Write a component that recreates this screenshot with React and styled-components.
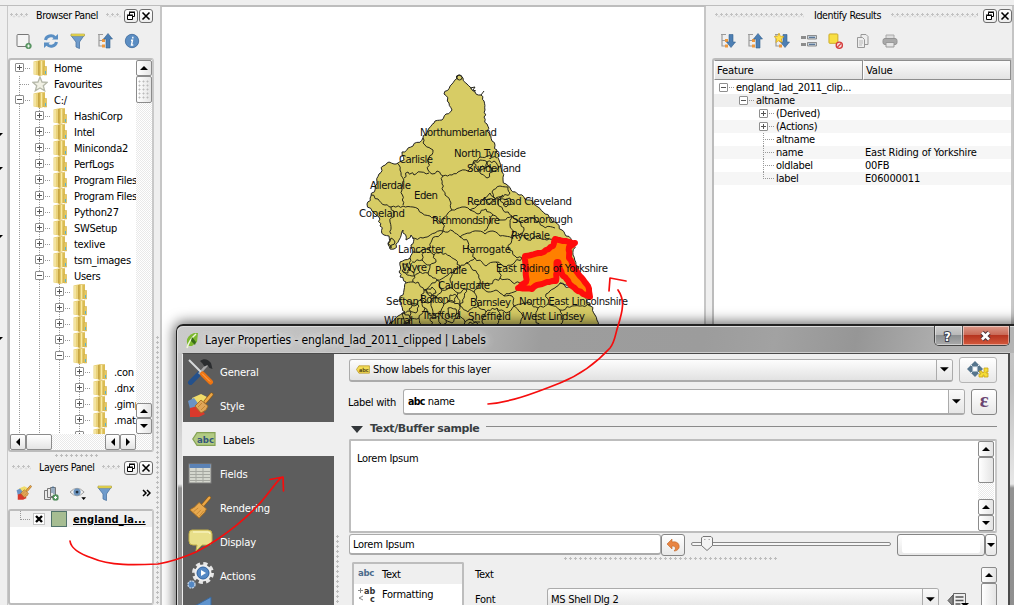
import React from "react";
import styled, { createGlobalStyle } from "styled-components";

const Global = createGlobalStyle`
  * { box-sizing: border-box; }
  body {
    margin: 0; overflow: hidden; background: #efefef; color: #000;
    font: 11px/13px "DejaVu Sans Condensed", "DejaVu Sans", "Noto Sans", sans-serif;
    font-stretch: condensed; letter-spacing: -0.28px;
  }
`;

/* ---------- window frame ---------- */
const Screen = styled.div`
  position: relative; width: 1014px; height: 605px; overflow: hidden;
  background: #efefef; display: flex; flex-direction: column;
`;
const TopEdge = styled.div`
  height: 6px; flex: none; border-bottom: 1px solid #bdbdbd; background: #efefef;
`;
const Workspace = styled.div`
  flex: 1; min-height: 0; display: flex;
  border-right: 2px solid #c4c4c4;
`;
const ToolStrip = styled.div`
  width: 8px; flex: none; border-right: 1px solid #c8c8c8; overflow: hidden;
`;
const LeftDock = styled.div`
  width: 146px; flex: none; display: flex; flex-direction: column;
`;
const dots = `radial-gradient(circle at 1.5px 1.5px, #bdbdbd 1px, transparent 1.3px)`;
const Splitter = styled.div`
  width: ${p => p.$w || 6}px; flex: none; display: flex; justify-content: center; align-items: flex-start;
  padding-top: ${p => p.$top || 0}px;
`;
const VGrip = styled.div`
  width: 3px; height: ${p => p.$h}px; background: ${dots}; background-size: 3px 5px;
`;
const HGrip = styled.div`
  height: 3px; width: ${p => p.$w}px; background: ${dots}; background-size: 5px 3px; margin: ${p => p.$m || "0"};
`;
const MapFrame = styled.div`
  width: 546px; flex: none; background: #fff; border: 1px solid #bdbdbd; border-width: 1px 2px 0 2px;
  border-color: #bdbdbd #c6c6c6; overflow: hidden;
`;
const RightDock = styled.div`
  width: 302px; flex: none; display: flex; flex-direction: column;
`;

/* ---------- dock widgets ---------- */
const DockTitle = styled.div`
  height: 19px; flex: none; display: flex; align-items: center; padding: ${p => p.$pad || "0 2px 0 0"};
  font-size: 10.6px; gap: ${p => p.$gap || 8}px; letter-spacing: -.4px; white-space: nowrap;
`;
const Texture = styled.div`
  flex: ${p => p.$w ? "none" : 1}; width: ${p => p.$w || 0}px; height: 5px;
  background: radial-gradient(circle at 1.5px 1.5px, #c2c2c2 1px, transparent 1.3px) 0 0/5px 5px,
              radial-gradient(circle at 1.5px 1.5px, #d4d4d4 .8px, transparent 1.2px) 2.5px 2px/5px 5px;
`;
const TitleButtons = styled.div`display: flex; gap: 1px; flex: none; margin-left: ${p => p.$l || 0}px;`;
const TitleBtn = styled.div`
  width: 14px; height: 14px; border: 1px solid #6d6d6d; border-radius: 3px;
  background: linear-gradient(#fff, #ececec); display: flex; align-items: center; justify-content: center;
`;
const Toolbar = styled.div`
  height: 32px; flex: none; display: flex; align-items: center; gap: 11px; padding-left: 8px;
`;
const MoreMark = styled.svg`margin-left: 18px;`;
const Box = styled.div`
  border: 2px solid #bcbcbc; border-right-color: #c9c9c9; border-radius: 3px; background: #fff; overflow: hidden;
  height: ${p => p.$h ? p.$h + "px" : "auto"}; flex: ${p => p.$h ? "none" : "1"};
  margin: ${p => p.$m || "0"}; min-height: 0; display: flex; flex-direction: column;
`;
const TreeArea = styled.div`display: flex; flex: 1; min-height: 0;`;
const TreeRows = styled.div`flex: 1; overflow: hidden; min-width: 0;`;
const TreeRow = styled.div`
  height: 16px; display: flex; align-items: center; white-space: nowrap; margin-left: -1px;
`;
const Cell = styled.div`
  width: 20px; height: 16px; flex: none; display: flex; align-items: center; justify-content: center;
  background: ${p => p.$line ? "repeating-linear-gradient(#999 0 1px, transparent 1px 2px) 10px 0/1px 100% no-repeat" : "none"};
`;
const Expander = styled.div`
  width: 9px; height: 9px; border: 1px solid #8f8f8f; border-radius: 1px; flex: none; margin-top: -1px;
  background:
    linear-gradient(#555, #555) center/5px 1px no-repeat,
    ${p => p.$open ? "" : "linear-gradient(#555, #555) center/1px 5px no-repeat,"} #fff;
`;
const Stub = styled.div`
  width: ${p => p.$w || 5}px; height: 1px; flex: none; margin: ${p => p.$m || "0"};
  background: repeating-linear-gradient(90deg, #999 0 1px, transparent 1px 2px);
`;
const IconCell = styled.div`
  width: 16px; height: 16px; flex: none; display: flex; justify-content: center; margin: 0 6px 0 ${p => p.$l}px;
`;
const SBar = styled.div`
  flex: none; display: flex; flex-direction: ${p => p.$row ? "row" : "column"};
  ${p => p.$row ? "height: 16px;" : "width: 16px;"}
  background: repeating-conic-gradient(#fff 0 25%, #e9e9e9 0 50%) 0 0/2px 2px;
`;
const SBtn = styled.div`
  width: ${p => p.$w || 16}px; height: ${p => p.$h || 16}px; flex: none; border: 1px solid #8b8b8b; border-radius: 2px;
  background: linear-gradient(${p => p.$row ? "180deg" : "90deg"}, #fff, #e4e4e4);
  display: flex; align-items: center; justify-content: center;
`;
const Gap = styled.div`flex: ${p => p.$n ? "none" : 1}; width: ${p => p.$n || 0}px; height: ${p => p.$n || 0}px;`;
const BarLead = styled.div`height: 6px; background: #efefef;`;
const Knurl = styled.div`
  width: 12px; height: 20px; background: radial-gradient(circle at 1.5px 1.5px, #bbb .8px, transparent 1.2px) 0 0/4px 4px;
`;
const LayerRow = styled.div`
  height: 16px; background: #f0f0f0; display: flex; align-items: center; padding-left: 10px;
`;
const LayerElbow = styled.div`
  width: 10px; height: 9px; align-self: flex-start; border: 1px dotted #999; border-width: 0 0 1px 1px;
`;
const CheckBox = styled.div`
  width: 12px; height: 12px; margin-left: 3px; border: 1px solid #c4c4c4; background: #fff; display: flex; align-items: center; justify-content: center;
`;
const Swatch = styled.div`width: 16px; height: 16px; margin: 0 6px; background: #a6bd92; border: 1px solid #51736b;`;
const LayerName = styled.span`font-weight: bold; text-decoration: underline; font-size: 11px; letter-spacing: .1px;`;

/* ---------- identify results ---------- */
const TableHead = styled.div`
  height: 21px; display: flex; flex: none; line-height: 20px; font-size: 11.2px;
`;
const HeadCell = styled.div`
  width: ${p => p.$w}px; padding-left: 2px; border: 1px solid #8d8d8d; border-left-color: #fff; height: 20px;
  background: linear-gradient(#fbfbfb, #e3e3e3); letter-spacing: -.2px;
`;
const ResultRow = styled.div`
  height: 13px; flex: none; display: flex; background: ${p => p.$bg};
`;
const FeatureCell = styled.div`
  width: 151px; flex: none; display: flex; align-items: center; padding-left: ${p => p.$l}px; gap: 1px; white-space: nowrap;
`;
const Branch = styled.div`
  width: 9px; height: 13px; flex: none;
  background:
    repeating-linear-gradient(#999 0 1px, transparent 1px 2px) 4px 0/1px ${p => p.$last ? "7px" : "100%"} no-repeat,
    repeating-linear-gradient(90deg, #999 0 1px, transparent 1px 2px) 4px 6px/5px 1px no-repeat;
`;
const ValueCell = styled.div`flex: 1; white-space: nowrap; letter-spacing: -.18px;`;

/* ---------- dialog ---------- */
const Dialog = styled.div`
  position: absolute; left: 176px; top: 324px; width: 850px; height: 300px; border: 1px solid #222; border-radius: 7px 0 0 0;
  border-top-width: 2px; overflow: visible; display: flex; flex-direction: column;
  background: linear-gradient(#c9c9c9 0, #c0c0c0 60px, #e8e8e8 158px, #929292 162px, #8f8f8f 100%);
  box-shadow: 0 0 13px 2px rgba(0,0,0,.6), inset 1px 1px 0 #ddd;
`;
const TitleBar = styled.div`
  height: 26px; margin: 1px 0 0 1px; flex: none; display: flex; align-items: center; padding-left: 7px; border-radius: 6px 0 0 0;
  background: linear-gradient(100deg, #cbcbcb 0, #b0b0b0 300px, #9d9d9d 360px, #9c9c9c 520px, #a2a2a2 590px, #969696 670px, #b0b0b0 760px, #b5b5b5 100%);
`;
const TitleText = styled.div`
  margin-left: 5px; font-size: 12px; letter-spacing: -.12px; white-space: nowrap; flex: 1;
  text-shadow: 0 0 6px #eee, 0 0 10px #ddd, 0 0 12px #ddd;
`;
const WinButtons = styled.div`
  display: flex; width: 76px; height: 20px; margin-right: 15px; align-self: flex-start; border: 1px solid #444; border-top: 0;
  border-radius: 0 0 5px 5px; overflow: hidden; margin-top: -1px;
`;
const WinBtn = styled.div`
  width: ${p => p.$w}px; display: flex; align-items: center; justify-content: center;
  box-shadow: inset 0 0 0 1px rgba(255,255,255,.45); border-right: ${p => p.$red ? 0 : "1px solid #555"};
  background: ${p => p.$red
    ? "linear-gradient(#dc9a8b 0, #ca6b58 45%, #b63520 50%, #d55a3d 100%)"
    : "linear-gradient(#cfcfcf 0, #b9b9b9 45%, #8c8f91 50%, #aaa 100%)"};
`;
const DialogBody = styled.div`
  margin-left: 5px; width: 828px; flex: 1; display: flex; background: #efefef;
  border: 1px solid #4b4b4b; border-width: 1px 2px 0 1px; border-left-color: #eee; box-shadow: 0 -1px 0 #ccc;
`;
const Sidebar = styled.div`width: 151px; flex: none; background: #5d5d5d; height: 100%; overflow: hidden;`;
const SideItem = styled.div`
  height: 34px; display: flex; align-items: center; padding: 2px 0 0 4px; font-size: 11.2px; letter-spacing: -.15px;
  color: ${p => p.$on ? "#000" : "#fff"}; background: ${p => p.$on ? "#efefef" : "transparent"};
  svg { margin: -2px ${p => p.$on ? 7 : 6}px 0 ${p => p.$on ? 5 : 0}px; flex: none; width: ${p => p.$on ? 24 : 27}px; }
`;
const Pane = styled.div`flex: 1; min-width: 0; display: flex; flex-direction: column; padding: 3px 11px 0 7px;`;
const Line = styled.div`display: flex; align-items: center; height: ${p => p.$h}px; margin-top: ${p => p.$t || 0}px; padding-left: ${p => p.$l || 0}px; flex: none;`;
const Combo = styled.div`
  height: ${p => p.$h}px; width: ${p => p.$w}px; flex: none; border: 1px solid #ababab; border-bottom-width: 2px; border-radius: 3px;
  background: ${p => p.$edit ? "#fff" : "linear-gradient(#fdfdfd, #e2e2e2)"}; display: flex; align-items: center; padding-left: ${p => p.$l ?? 4}px;
  gap: 3px; white-space: nowrap; overflow: hidden;
`;
const Drop = styled.div`
  width: 16px; height: 100%; margin-left: auto; border-left: 1px solid #ababab; background: linear-gradient(#fafafa, #e6e6e6);
  display: flex; align-items: center; justify-content: center;
`;
const Button = styled.div`
  width: ${p => p.$w}px; height: ${p => p.$h}px; border: 1px solid ${p => p.$soft ? "#b5b5b5" : "#858585"}; border-radius: 3px; flex: none;
  background: linear-gradient(#fff, #e8e8e8); display: flex; align-items: center; justify-content: center;
`;
const Abc = styled.b`font-size: 10.5px; letter-spacing: -.7px;`;
const Epsilon = styled.span`font: bold 21px/20px "Liberation Serif", serif; color: #6a4672; padding-bottom: 5px;`;
const Triangle = styled.svg`margin: 4px 0 0 3px; flex: none;`;
const GroupTitle = styled.b`font: bold 11px/14px "DejaVu Sans", sans-serif; font-stretch: normal; letter-spacing: -.42px; color: #3a3f43; margin: 4px 0 0 7px; white-space: nowrap;`;
const Rule = styled.div`height: 1px; background: #8a8a8a; flex: 1; margin: -2px 0 0 7px;`;
const Preview = styled.div`
  height: 94px; border: 2px solid #bdbdbd; border-right-color: #c9c9c9; border-radius: 2px; background: #fff; display: flex; padding-right: 1px;
  flex: none; margin-left: 1px;
`;
const PreviewText = styled.div`flex: 1; padding: 11px 0 0 6px;`;
const SliderTrack = styled.div`
  width: 200px; height: 4px; border: 1px solid #888; border-radius: 2px; background: #f6f6f6; margin: -2px 0 0 6px; flex: none;
  display: flex; align-items: center; padding-left: 9px;
  svg { flex: none; }
`;
const ColorWell = styled.div`width: 78px; height: 16px; background: #fff; border-radius: 2px;`;
const Lower = styled.div`display: flex; flex: 1; min-height: 0; margin-left: 4px;`;
const OptionList = styled.div`
  width: 112px; flex: none; border: 2px solid #bdbdbd; border-bottom: 0; border-radius: 2px 2px 0 0; background: #fff; margin-top: 1px; height: 60px;
`;
const Option = styled.div`
  height: 20px; display: flex; align-items: center; gap: 6px; padding-left: 4px; background: ${p => p.$on ? "#efefef" : "#fff"};
  svg { flex: none; }
`;
const FormArea = styled.div`flex: 1; padding: 5px 0 0 11px;`;
const FieldLabel = styled.div`width: ${p => p.$w}px; flex: none; white-space: nowrap;`;

/* ---------- overlay ---------- */
const Ink = styled.svg`position: absolute; left: 0; top: 0; pointer-events: none;`;

const Arrow = ({ d = "down", s = 1 }) => {
  const r = { down: 0, up: 180, left: 90, right: -90 }[d];
  return <svg width={8 * s} height={8 * s} viewBox="0 0 8 8"><path d="M0 2h8L4 6z" transform={`rotate(${r} 4 4)`} /></svg>;
};

const Folder = () => (
  <svg width="14" height="16" viewBox="0 0 14 16">
    <path d="M.5 1.500L6 .3V15.500L.5 14.500z" fill="#ead27a" />
    <path d="M2 2v12.500" stroke="#f7ebb0" strokeWidth="1.400" />
    <path d="M6 .3h6v14.500L6 16z" fill="#dcbd55" />
    <path d="M8.500 1v14" stroke="#f7e9a5" strokeWidth="1.600" />
    <path d="M5.800 1v14.500" stroke="#b8932f" strokeWidth="1" />
    <path d="M11 6.500h2.700V15H11z" fill="#e6c962" stroke="#cba840" strokeWidth=".5" /><path d="M12.500 11v3" stroke="#58b4d2" />
  </svg>
);
const Star = () => (
  <svg width="16" height="16" viewBox="0 0 16 16"><path d="M8 1l2 5 5.300.300-4 3.400 1.400 5.100L8 12l-4.700 2.800 1.400-5.100-4-3.400L6 6z" fill="#f0f0e4" stroke="#b5b8a9" strokeWidth="1.300" /></svg>
);
const AddLayer = () => (
  <svg width="16" height="16" viewBox="0 0 16 16"><rect x="1" y="1.500" width="12" height="12" rx="1" fill="#f5f5f5" stroke="#777" /><circle cx="12.500" cy="13" r="2.800" fill="#63a06c" stroke="#3d7d48" strokeWidth=".6" /><path d="M11 13h3M12.500 11.500v3" stroke="#fff" strokeWidth=".8" /></svg>
);
const Refresh = () => (
  <svg width="16" height="16" viewBox="0 0 16 16" fill="none" stroke="#5a8fc4" strokeWidth="3"><path d="M2.500 7A5.500 5 0 0 1 12 4.500M13.500 9A5.500 5 0 0 1 4 11.500" /><path d="M9 6.500h6v-5.500zM7 9.500H1V15z" fill="#5a8fc4" stroke="none" /></svg>
);
const Funnel = () => (
  <svg width="16" height="16" viewBox="0 0 16 16"><path d="M1 2.500h13L9.500 9v6.500L6 14V9z" fill="#6f9bcb" stroke="#4a74a2" strokeWidth=".8" /><path d="M1 1h13.500v2H1z" fill="#f3e152" stroke="#a89a3d" strokeWidth=".6" /></svg>
);
const TreeArrow = ({ down, star }) => (
  <svg width="16" height="16" viewBox="0 0 16 16">
    <path d="M1 1.500h5M2 2v11h4M2 7.500h4" fill="none" stroke="#9a9a9a" strokeWidth="1.200" />
    <rect x="5" y="6" width="3" height="3" fill="#ee983c" /><rect x="5" y="11.500" width="3" height="3" fill="#ee983c" />
    <path d={down ? "M9 1.500h4V9h2.500l-4.500 5.500L6.500 9H9z" : "M11 .5l4.500 5.500H13v9H9V6H6.500z"} fill="#4d7fb4" stroke="#34618f" strokeWidth=".6" />
    {star && <path d="M5 0l1.400 3.300 3.600.2-2.700 2.400.9 3.600L5 7.500 1.800 9.500l.9-3.600L0 3.500l3.600-.2z" fill="#ffe14a" stroke="#d3a216" strokeWidth=".6" />}
  </svg>
);
const Info = () => (
  <svg width="16" height="16" viewBox="0 0 16 16"><circle cx="8" cy="8" r="6.700" fill="#5c8ec3" stroke="#3b689b" strokeWidth=".8" /><path d="M8.800 3.800v1.600M7 7.200h1.500L7.500 12H9.300" fill="none" stroke="#fff" strokeWidth="1.400" /></svg>
);
const RowsIcon = () => (
  <svg width="16" height="16" viewBox="0 0 16 16"><path d="M0 3h5v3H0zM0 10h5v3H0z" fill="#8c8c8c" /><path d="M6.500 2.500h9v3.500h-9zM6.500 9.500h9V13h-9z" fill="#c9d2da" stroke="#777" strokeWidth=".8" /><path d="M8 4.300h6M8 11.300h6" stroke="#3f6189" /></svg>
);
const ClearSel = () => (
  <svg width="16" height="16" viewBox="1 0 16 17"><rect x="1.500" y="1" width="9.500" height="10" rx="1" fill="#f8df43" stroke="#caa925" /><circle cx="12.500" cy="13" r="3.300" fill="#f8d9d9" stroke="#d43c3c" strokeWidth="1.400" /><path d="M10.500 15l4-4" stroke="#d43c3c" strokeWidth="1.300" /></svg>
);
const Copy = () => (
  <svg width="16" height="16" viewBox="-1 0 16 16" fill="#eee" stroke="#999"><path d="M5 1.500h5l2 2v8H5z" /><path d="M1.500 4.500h5l2 2v8h-7z" /><path d="M3 8h4M3 10h4M3 12h3" stroke="#bbb" /></svg>
);
const Printer = () => (
  <svg width="16" height="16" viewBox="0 0 16 16"><path d="M4 2h8v4H4z" fill="#ddd" stroke="#aaa" /><rect x="1" y="5.500" width="14" height="6" rx="2" fill="#a9a9a9" stroke="#939393" /><path d="M4 9.500h8V14H4z" fill="#e6e6e6" stroke="#999" /></svg>
);
const StyleIcon = ({ s = 16 }) => (
  <svg width={s} height={s} viewBox="0 0 27 27">
    <path d="M5 6l9-4 6 3-5 9-8-2z" fill="#f0dc6a" /><path d="M1 9l6-3 6 8-3 5-7-2z" fill="#6b93c4" /><path d="M3 16l8-2 7 8-6 3-9 0z" fill="#d9392c" />
    <path d="M24.500 2.500l-6 7" stroke="#8a5a18" strokeWidth="3.800" strokeLinecap="round" /><path d="M24.500 2.500l-6 7" stroke="#eca645" strokeWidth="2.600" strokeLinecap="round" />
    <path d="M14 8l7 6-2 4-5 3-6-7z" fill="#e0a558" stroke="#a36d22" strokeWidth=".9" />
    <path d="M11 15l4-4M14 18l4-4" stroke="#c58732" />
  </svg>
);
const Broom = () => (
  <svg height="25" viewBox="0 0 27 27">
    <path d="M23 3l-7 8" stroke="#8a5a18" strokeWidth="3.800" strokeLinecap="round" /><path d="M23 3l-7 8" stroke="#eca645" strokeWidth="2.600" strokeLinecap="round" />
    <path d="M12 8l8 7-2 4-6 6-10-9 5-3z" fill="#e8a94f" stroke="#a36d22" />
    <path d="M6 18l5-4M9 21l5-5M12 23l5-6" stroke="#c58732" />
  </svg>
);
const Group = () => (
  <svg width="16" height="16" viewBox="0 0 16 16" fill="#e9e9e9" stroke="#777"><path d="M1.500 5.500h6v9h-6z" /><path d="M4.500 3.500h6v9h-6z" /><path d="M7.500 2.500h5v9h-5z" /><path d="M9 8V2.500a1.200 1.200 0 0 1 2 0V9" fill="none" stroke="#4b7196" /><rect x="10" y="10" width="5" height="5" rx="1" fill="#67a670" stroke="#3d7d48" /><path d="M11 12.500h3M12.500 11v3" stroke="#fff" /></svg>
);
const Eye = () => (
  <svg width="16" height="16" viewBox="0 0 17 16"><path d="M0 7q7.500-8 15 0-7.500 8-15 0z" fill="#f2f2f2" stroke="#999" /><circle cx="7.500" cy="7" r="3.800" fill="#6b93bd" /><circle cx="7.500" cy="7" r="1.500" fill="#24313e" /><path d="M12 12.500h5l-2.500 3z" /></svg>
);
const Tools = () => (
  <svg height="27" viewBox="0 0 27 27"><path d="M3.500 24.500L13 15" stroke="#24518c" strokeWidth="5" strokeLinecap="round" /><path d="M12 16l8-9" stroke="#a9a9a9" strokeWidth="2.600" /><path d="M13 3c4-3 8-2 11 2l1.500 6-3-1-2-3-3 1.500-2-3z" fill="#2b2d2f" /><path d="M2 2l12 12" stroke="#d7dadb" strokeWidth="2" /><path d="M15.500 16l8 8" stroke="#ee7411" strokeWidth="5" strokeLinecap="round" /><path d="M15 15.500l8 8" stroke="#ffad5e" strokeWidth="1" /></svg>
);
const TagIcon = ({ small }) => (
  <svg width={small ? 14 : 24} height={small ? 9 : 14} viewBox="0 0 24 14"><path d="M5 .7h18v12.600H5L.8 7z" fill={small ? "#f3dc55" : "#b2cb83"} stroke={small ? "#b18f25" : "#85a155"} strokeWidth="1.200" /><text x="5" y="10.500" fontSize="9.500" letterSpacing="0" fontWeight="bold" fontFamily="DejaVu Sans" textLength="17" lengthAdjust="spacingAndGlyphs" fill={small ? "#5b4c14" : "#33557b"}>abc</text></svg>
);
const TableIcon = () => (
  <svg height="27" viewBox="0 0 27 27"><rect x="2" y="4" width="22" height="19" fill="#d5d7ce" stroke="#7f7f7f" /><path d="M2.500 4h21v4h-21z" fill="#5b82b5" /><path d="M3 11.500h20M3 14.500h20M3 17.500h20M3 20.500h20M9 8v15M16 8v15" stroke="#a5a7a0" /></svg>
);
const Bubble = () => (
  <svg height="27" viewBox="0 0 27 27"><path d="M5 2h16q4 0 4 4v7q0 4-4 4h-6l-6 6 1-6H6q-4 0-4-4V6q0-4 3-4z" fill="#e8df8a" stroke="#c3b14a" /><path d="M6 4h15q2 0 2 2" stroke="#fffbd0" fill="none" /></svg>
);
const Gear = () => (
  <svg height="29" viewBox="0 0 27 29"><circle cx="16" cy="12" r="9" fill="none" stroke="#e6e6e6" strokeWidth="4" strokeDasharray="4 3.070" /><circle cx="16" cy="12" r="8.500" fill="#efefef" /><circle cx="16" cy="12" r="6" fill="#5488c4" stroke="#2f62a0" /><path d="M14 9l5 3-5 3z" fill="#fff" /><circle cx="4.500" cy="23.500" r="3.500" fill="#5488c4" stroke="#b9c9dc" strokeWidth="1.500" strokeDasharray="2 .8" /></svg>
);
const JoinIcon = () => (
  <svg height="27" viewBox="0 0 27 27"><path d="M6 11L24 1v22z" fill="#5f93cd" stroke="#3b689b" /></svg>
);

/* ---------- map ---------- */
// Adds small deterministic wiggles to a polyline so boundaries look surveyed.
const wiggle = (pts, close, amp = 3) => {
  const p = pts.trim().split(/\s+/).map(s => s.split(",").map(Number));
  let out = `M${p[0]}`, k = p[0][0] * 7 + p[0][1];
  const n = close ? p.length : p.length - 1;
  for (let i = 0; i < n; i++) {
    const a = p[i], b = p[(i + 1) % p.length];
    const len = Math.hypot(b[0] - a[0], b[1] - a[1]), m = Math.max(1, Math.round(len / 2.5));
    for (let j = 1; j <= m; j++) {
      k = (k * 31 + 17) % 101;
      const o = j === m ? 0 : (k / 101 - 0.5) * amp, t = j / m;
      out += `L${(a[0] + (b[0] - a[0]) * t - (b[1] - a[1]) / len * o).toFixed(1)},${(a[1] + (b[1] - a[1]) * t + (b[0] - a[0]) / len * o).toFixed(1)}`;
    }
  }
  return out + (close ? "Z" : "");
};
const coast = "459,75 463,78 467,84 472,90 475,92 481,95 484,101 485,110 484,117 487,124 489,133 492,141 497,150 499,160 502,172 503,180 506,184 511,190 519,195 530,200 538,207 545,214 555,222 562,230 566,236 575,242 573,255 580,275 591,296 575,288 560,283 575,290 590,303 595,315 601,330 384,330 392,322 398,316 405,312 399,301 404,290 406,282 400,277 400,262 410,258 413,252 411,245 414,239 411,235 406,240 403,230 399,240 394,249 390,249 388,243 389,236 384,235 380,226 379,217 372,211 367,204 371,196 377,184 379,174 383,166 389,162 394,164 398,163 404,160 402,152 413,146 423,138 428,130 435,121 442,120 446,114 452,110 449,103 444,94 452,84";
const borders = [
  "423,138 425,145 433,150 429,158 428,170 432,174 437,171 443,176 452,175 460,171 468,171 473,163 480,157 487,156 497,158",
  "404,178 408,172 414,175 421,172 429,173", "397,163 400,170 404,180 402,190 403,205",
  "371,195 378,199 385,205 391,207 403,206 413,207 422,213 430,216 436,218 443,223",
  "391,207 394,214 390,222 391,234", "443,176 442,184 445,195 451,203 452,210 443,218 443,231",
  "452,210 462,207 470,210 478,205 484,198 494,200 503,195", "443,231 435,233 429,236 423,238 412,238",
  "443,231 453,231 460,237 468,242 470,250 475,258 466,263 460,268 456,260 450,256 441,252 434,255 429,249 432,240 443,231",
  "460,237 470,233 478,231 485,234 493,231 500,236 512,238", "470,210 478,214 486,209 493,215 489,224 484,231",
  "493,215 503,220 512,216 520,222 532,218 543,226 555,228", "503,195 498,203 503,210 512,216",
  "512,238 508,248 515,256 522,258", "512,238 520,234 528,240 538,236 547,240 556,238",
  "475,258 486,266 496,262 506,267 515,262 522,258", "466,263 477,273 480,283 490,284 500,278 512,282 522,284",
  "412,262 422,260 430,265 428,273 437,280 448,275 455,270 460,268", "403,272 412,276 420,272 428,273",
  "406,283 418,282 424,290 432,283 437,280", "412,252 422,250 429,249", "410,258 410,268 414,275 413,282",
  "424,290 420,300 425,308 419,318 423,330", "437,280 442,290 436,298 444,304 440,314 446,320 443,330",
  "424,290 432,295 436,298 428,303 420,300", "442,290 452,288 458,293 466,289 474,292 480,283",
  "444,304 453,301 460,306 458,293", "460,306 468,312 478,306 486,312 482,322 487,330", "474,292 476,300 478,306",
  "480,283 488,292 496,290 504,296 514,292 522,288", "486,312 497,308 506,313 514,306 512,296 504,296",
  "514,306 522,314 520,324 524,330", "514,306 528,302 538,308 548,304 560,310 572,306 590,306",
  "548,304 546,294 556,287 560,283", "538,308 536,320 542,330", "560,310 563,320 558,330", "440,314 430,316 425,308",
  "460,306 458,316 465,322 462,330", "406,300 414,306 420,300", "404,312 410,318 406,330", "410,318 419,318",
  "497,308 500,318 496,330", "496,262 500,270 500,278", "452,288 450,279 455,270",
  "466,289 464,298 460,306", "480,322 472,320 465,322", "446,320 452,323 458,316", "432,295 431,303 433,314",
  "512,216 510,225 514,232 512,238", "520,222 524,230 520,234", "422,260 424,252", "418,266 420,272", "430,265 436,262 434,255",
];
const towns = [
  "473,163 480,160 487,162 486,168 478,170", "480,168 488,166 492,172 487,178 481,174", "487,162 494,161 499,167 492,172",
  "492,192 500,186 508,187 510,193 503,197 496,199", "484,198 490,193 496,199 490,204", "500,199 510,198 514,204 506,207",
  "391,238 395,242 391,248 388,244", "403,264 410,268 408,273 402,271",
  "402,313 410,311 412,320 404,324", "430,318 438,316 441,324 433,327", "448,308 456,309 455,316 448,316", "470,322 478,324 476,329 469,328",
  "426,290 432,287 436,293 430,296", "412,303 419,306 416,313 409,309", "450,295 457,296 455,302 448,301",
];
const labels = [
  ["Northumberland", 420, 132, 77], ["Carlisle", 399, 159, 34], ["North Tyneside", 454, 153, 72], ["Sunderland", 467, 168, 54],
  ["Allerdale", 370, 185, 41], ["Eden", 414, 195, 24], ["Copeland", 359, 213, 46], ["Redcar and Cleveland", 467, 201, 105],
  ["Richmondshire", 432, 220, 68], ["Scarborough", 512, 219, 61], ["Ryedale", 511, 235, 39], ["Lancaster", 398, 249, 47],
  ["Harrogate", 462, 249, 49], ["Wyre", 402, 267, 25], ["Pendle", 435, 270, 32], ["Calderdale", 438, 285, 52],
  ["Sefton", 386, 301, 33], ["Bolton", 420, 299, 29], ["Barnsley", 470, 302, 41], ["North East Lincolnshire", 519, 301, 109],
  ["Wirral", 384, 320, 29], ["Trafford", 422, 315, 39], ["Sheffield", 468, 316, 43], ["West Lindsey", 522, 316, 63],
  ["East Riding of Yorkshire", 496, 268, 112],
];
const riding = "525,256 531,255 541,253 546,250 553,246 555,239 563,241 575,243 569,247 569,258 577,272 588,286 590,297 578,291 569,283 562,274 558,263 557,272 556,281 547,282 537,285 532,289 518,288 526,282 526,270";
const EnglandMap = () => (
  <svg width="542" height="598" viewBox="162 7 542 598">
    <path d={wiggle(coast, true)} fill="#d7cc65" stroke="#222" strokeWidth="1" />
    <g fill="none" stroke="#26261c" strokeWidth="1">
      {borders.map((b, i) => <path key={i} d={wiggle(b)} />)}
      {towns.map((b, i) => <path key={i} d={wiggle(b, true)} />)}
      <circle cx="459.500" cy="77.500" r="2.500" /><path d="M470 88l5-1-2 3 3 1M481 95l3-4" />
    </g>
    <path d={wiggle(riding, true, 1.2)} fill="#ff8000" stroke="#ff0c0c" strokeWidth="6" strokeLinejoin="round" />
    <path d="M557.500 263v3" stroke="#ff0c0c" strokeWidth="8" strokeLinecap="round" />
    <g fontSize="11.300" fill="#111" fontFamily="DejaVu Sans Condensed, DejaVu Sans, sans-serif">
      {labels.map(([t, x, y, w]) => <text key={t} x={x} y={y + 4} textLength={w} letterSpacing="0">{t}</text>)}
    </g>
  </svg>
);

/* ---------- data ---------- */
const tree = [
  [0, "Home", "+"], [0, "Favourites", "*"], [0, "C:/", "-"],
  ...["HashiCorp", "Intel", "Miniconda2", "PerfLogs", "Program Files", "Program Files", "Python27", "SWSetup", "texlive", "tsm_images"].map(t => [1, t, "+"]),
  [1, "Users", "-"], [2, "", "+"], [2, "", "+"], [2, "", "+"], [2, "", "+"], [2, "", "-"],
  [3, ".con", "+"], [3, ".dnx", "+"], [3, ".gimp", "+"], [3, ".mat", "+"], [3, "", "+"],
];
const results = [
  [0, "england_lad_2011_clip...", "-", "", "#fff"], [1, "altname", "-", "", "#efefef"], [2, "(Derived)", "+", "", "#fff"], [2, "(Actions)", "+", "", "#f6f6f6"],
  [2, "altname", "", "", "#fff"], [2, "name", "", "East Riding of Yorkshire", "#f6f6f6"], [2, "oldlabel", "", "00FB", "#fff"], [2, "label", "", "E06000011", "#f6f6f6"],
];
const pages = [
  ["General", <Tools />], ["Style", <StyleIcon s={27} />], ["Labels", <TagIcon />], ["Fields", <TableIcon />],
  ["Rendering", <Broom />], ["Display", <Bubble />], ["Actions", <Gear />], ["", <JoinIcon />],
];

const PanelButtons = ({ l }) => (
  <TitleButtons $l={l}>
    <TitleBtn><svg width="10" height="10" viewBox="0 0 10 10" fill="#fff" stroke="#000"><path d="M3.500 1.500h5v4h-5zM3 1h6" /><path d="M1.500 4.500h5v4h-5zM1 4h6" /></svg></TitleBtn>
    <TitleBtn><svg width="10" height="10" viewBox="0 0 10 10"><path d="M1.500 1.500l7 7M8.500 1.500l-7 7" stroke="#000" strokeWidth="1.600" /></svg></TitleBtn>
  </TitleButtons>
);
const StripMarks = () => (
  <svg width="8" height="400" viewBox="0 6 8 400"><path d="M-2 133h5l-3 3zM-2 167h5l-3 3zM-2 235h5l-3 3zM-2 337h5l-3 3z" /></svg>
);

export default function App() {
  return (
    <Screen>
      <Global />
      <TopEdge />
      <Workspace>
        <ToolStrip><StripMarks /></ToolStrip>
        <LeftDock>
          <DockTitle $pad="0 1px 0 2px">
            <Texture $w={18} />Browser Panel<Texture /><PanelButtons l={-5} />
          </DockTitle>
          <Toolbar><AddLayer /><Refresh /><Funnel /><TreeArrow /><Info /></Toolbar>
          <Box $h={394} $m="1px 0 0">
            <TreeArea>
              <TreeRows>
                {tree.map(([lv, name, kind], i) => (
                  <TreeRow key={i}>
                    {Array.from({ length: lv }, (_, k) => <Cell key={k} $line />)}
                    <Cell $line={i > 0}>{kind !== "*" && <Expander $open={kind === "-"} />}</Cell>
                    <Stub $w={kind === "*" ? 9 : 5} $m={kind === "*" ? "0 0 0 -9px" : "0 0 0 -4px"} />
                    <IconCell $l={kind === "*" ? 3 : 2}>{kind === "*" ? <Star /> : <Folder />}</IconCell>
                    {name}
                  </TreeRow>
                ))}
              </TreeRows>
              <SBar>
                <SBtn $h={16}><Arrow d="up" /></SBtn>
                <SBtn $h={27}><Knurl /></SBtn>
                <Gap />
                <SBtn $h={15}><Arrow d="up" /></SBtn>
                <SBtn $h={16}><Arrow /></SBtn>
              </SBar>
            </TreeArea>
            <SBar $row>
              <SBtn $row><Arrow d="left" /></SBtn>
              <SBtn $row $w={26} />
              <Gap />
              <SBtn $row $w={15}><Arrow d="left" /></SBtn>
              <SBtn $row><Arrow d="right" /></SBtn>
              <Gap $n={16} />
            </SBar>
          </Box>
          <HGrip $w={44} $m="2px auto 1px 47px" />
          <DockTitle $pad="0 1px 0 4px">
            <Texture $w={19} />Layers Panel<Texture /><PanelButtons l={-4} />
          </DockTitle>
          <Toolbar>
            <StyleIcon /><Group /><Eye /><Funnel />
            <MoreMark width="9" height="8" viewBox="0 0 9 8"><path d="M1 1l3 3-3 3M5 1l3 3-3 3" fill="none" stroke="#000" strokeWidth="1.500" /></MoreMark>
          </Toolbar>
          <Box>
            <LayerRow><LayerElbow /><CheckBox><svg width="8" height="8" viewBox="0 0 8 8"><path d="M1 1l6 6M7 1L1 7" stroke="#000" strokeWidth="2.400" /></svg></CheckBox><Swatch /><LayerName>england_la...</LayerName></LayerRow>
          </Box>
        </LeftDock>
        <Splitter $top={330}><VGrip $h={270} /></Splitter>
        <MapFrame><EnglandMap /></MapFrame>
        <Splitter />
        <RightDock>
          <DockTitle $gap={10} $pad="0 2px 0 3px"><Texture $w={89} />Identify Results<Texture /><PanelButtons l={-5} /></DockTitle>
          <Toolbar>
            <TreeArrow down /><TreeArrow /><TreeArrow down star /><RowsIcon /><ClearSel /><Copy /><Printer />
          </Toolbar>
          <Box $m="1px 1px 0 0">
            <TableHead><HeadCell $w={149}>Feature</HeadCell><HeadCell $w={148}>Value</HeadCell></TableHead>
            {results.map(([lv, name, kind, val, bg], i) => (
              <ResultRow key={i} $bg={bg}>
                <FeatureCell $l={5 + lv * 20}>
                  {kind ? <Expander $open={kind === "-"} /> : <Branch $last={i === results.length - 1} />}<Stub $w={6} />{name}
                </FeatureCell>
                <ValueCell>{val}</ValueCell>
              </ResultRow>
            ))}
          </Box>
        </RightDock>
      </Workspace>

      <Dialog>
        <TitleBar>
          <svg width="15" height="18" viewBox="0 0 15 18"><path d="M3 15Q-1 6 9 2l4 0-1 9-5 4z" fill="#7cb82e" /><path d="M2 17Q4 9 11 3" stroke="#eef7d8" strokeWidth="1.600" fill="none" /><path d="M7 6l4 5-1 3-4-4z" fill="#386b18" /></svg>
          <TitleText>Layer Properties - england_lad_2011_clipped | Labels</TitleText>
          <WinButtons>
            <WinBtn $w={28}><svg width="12" height="14" viewBox="0 0 12 14"><text x="2" y="12" fontSize="13" fontWeight="bold" fontFamily="DejaVu Sans" fill="#fff" stroke="#3b4150" strokeWidth="2" paintOrder="stroke">?</text></svg></WinBtn>
            <WinBtn $w={47} $red><svg width="13" height="12" viewBox="0 0 13 12"><path d="M3 2.500l7 7M10 2.500l-7 7" stroke="#4c3037" strokeWidth="4.600" /><path d="M3 2.500l7 7M10 2.500l-7 7" stroke="#fff" strokeWidth="2.800" /></svg></WinBtn>
          </WinButtons>
        </TitleBar>
        <DialogBody>
          <Sidebar>
            {pages.map(([t, icon], i) => <SideItem key={i} $on={i === 2}>{icon}{t}</SideItem>)}
          </Sidebar>
          <Splitter $w={7} $top={181}><VGrip $h={80} /></Splitter>
          <Pane>
            <Line $h={26} $l={1}>
              <Combo $h={23} $w={604} $l={6}><TagIcon small />Show labels for this layer<Drop><Arrow s={1.1} /></Drop></Combo>
              <Gap $n={6} />
              <Button $w={38} $h={26} $soft>
                <svg width="22" height="18" viewBox="0 0 22 18"><path d="M8 0l8 8-8 8-8-8z" fill="#55758d" /><path d="M6 6h4v4H6zM3.500 3.500l2 2M12.500 3.500l-2 2M3.500 12.500l2-2M12.500 12.500l-2-2" fill="#fff" stroke="#e6edf2" /><path d="M12 10h3v1.500h2V7h4v4h-2v1h2v4h-4v-2h-1v2h-4v-3h2z" fill="#f5dd38" stroke="#caa415" strokeWidth=".8" /></svg>
              </Button>
            </Line>
            <Line $h={26} $t={6}>
              <FieldLabel $w={55}>Label with</FieldLabel>
              <Combo $h={26} $w={562} $edit><Abc>abc</Abc>name<Drop><Arrow s={1.1} /></Drop></Combo>
              <Gap $n={6} />
              <Button $w={26} $h={26}><Epsilon>ε</Epsilon></Button>
            </Line>
            <Line $h={24}>
              <Triangle width="12" height="8" viewBox="0 0 12 8"><path d="M0 1h12L6 8z" fill="#33373a" /></Triangle>
              <GroupTitle>Text/Buffer sample</GroupTitle><Rule />
            </Line>
            <Preview>
              <PreviewText>Lorem Ipsum</PreviewText>
              <SBar>
                <SBtn $h={16}><Arrow d="up" /></SBtn><SBtn $h={26} /><Gap /><SBtn $h={16}><Arrow d="up" /></SBtn><SBtn $h={16}><Arrow /></SBtn>
              </SBar>
            </Preview>
            <Line $h={23} $l={1}>
              <Combo $h={21} $w={312} $edit $l={3}>Lorem Ipsum</Combo>
              <Button $w={24} $h={22}><svg width="14" height="14" viewBox="0 0 14 14"><path d="M1 6l5-5v3c5-1 8 2 7 6-1 2-3 3-5 3 3-3 1-5-2-5v3z" fill="#e88442" stroke="#bf6425" strokeWidth=".6" /></svg></Button>
              <SliderTrack><svg width="12" height="15" viewBox="0 0 12 15"><path d="M2 .5h8L11.500 2v7.500l-5.500 5-5.500-5V2z" fill="#f4f4f4" stroke="#777" /><path d="M3 3.500h1.500M7.500 3.500H9" stroke="#aaa" /></svg></SliderTrack>
              <Gap $n={6} />
              <Button $w={88} $h={22}><ColorWell /></Button>
              <Button $w={12} $h={22}><Arrow /></Button>
            </Line>
            <HGrip $w={214} $m="1px 0 1px 216px" />
            <Lower>
              <OptionList>
                <Option $on><svg width="18" height="14" viewBox="0 0 18 14"><text x="0" y="9" fontSize="9.500" fontWeight="bold" fontFamily="DejaVu Sans" textLength="16" fill="#4c6c8c">abc</text></svg>Text</Option>
                <Option><svg width="18" height="17" viewBox="0 0 18 17" fontSize="9" fontWeight="bold" fontFamily="DejaVu Sans" fill="#333"><text x="6" y="8" textLength="11">ab</text><text x="12" y="16">c</text><path d="M0 4.500h5M2.500 2v5M5 10l-4 2 4 2" stroke="#888" fill="none" /></svg>Formatting</Option>
              </OptionList>
              <FormArea>
                <Line $h={16}>Text</Line>
                <Line $h={23} $t={6}>
                  <FieldLabel $w={72}>Font</FieldLabel>
                  <Combo $h={23} $w={392} $l={3}>MS Shell Dlg 2<Drop><Arrow s={1.1} /></Drop></Combo>
                  <Gap $n={8} />
                  <svg width="24" height="18" viewBox="0 0 24 18"><path d="M6 4v11L1 9.500z" fill="#888" stroke="#555" /><path d="M6.500 2.500h12v14h-12z" fill="#eee" stroke="#666" /><path d="M8.500 6h8M8.500 9.500h8M8.500 13h5" stroke="#555" strokeWidth="1.300" /><path d="M14 12h8l-4 4z" /></svg>
                </Line>
              </FormArea>
              <SBar>
                <BarLead /><SBtn $h={16}><Arrow d="up" /></SBtn><SBtn $h={50} />
              </SBar>
            </Lower>
          </Pane>
        </DialogBody>
      </Dialog>

      <Ink width="1014" height="605" viewBox="0 0 1014 605" fill="none" stroke="#f60d0d" strokeWidth="1.700" strokeLinecap="round" strokeLinejoin="round">
        <path d="M70 541C71 549 80 554 92 558 110 566 135 565 158 564 170 562 180 559 196 552 225 537 252 514 266 496 274 486 278 480 281 478M270 479.500L283 477 283.500 491" />
        <path d="M488 404C510 402 530 395 560 383 585 373 600 359 610 348 615 342 615 335 618 326 623 310 625 300 618 290M609 291L610 278 626 281" />
      </Ink>
    </Screen>
  );
}
